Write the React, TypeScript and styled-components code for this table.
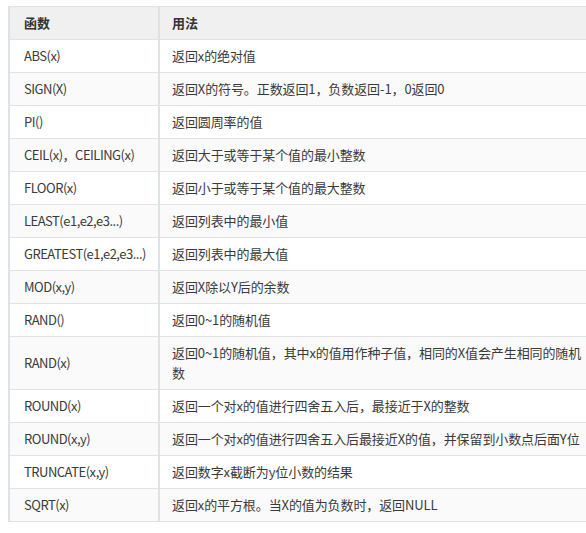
import React from "react";
import styled, { createGlobalStyle } from "styled-components";

const GlobalStyle = createGlobalStyle`
  html, body {
    margin: 0;
    padding: 0;
    background: #ffffff;
    overflow: hidden;
  }
  body {
    font-family: "Noto Sans CJK SC", "Noto Sans", sans-serif;
  }
`;

const Page = styled.div`
  padding: 6px 0 0 8px;
  width: 586px;
  height: 533px;
  box-sizing: border-box;
  overflow: hidden;
`;

const Table = styled.table`
  border-collapse: collapse;
  width: 594px;
  table-layout: fixed;
  font-size: 13px;
  line-height: 20px;
  color: #3a3a3a;
  border-left: 2px solid #dfe2e5;
  border-right: 2px solid #dfe2e5;
`;

const HeadRow = styled.tr`
  background: #f0f0f0;
`;

const Row = styled.tr<{ $shade: boolean }>`
  background: ${(p) => (p.$shade ? "#fafafa" : "#ffffff")};
`;

const Th = styled.th`
  text-align: left;
  font-weight: 700;
  color: #333333;
  padding: 6px 13px 6px 14px;
  border-top: 1px solid #dfe2e5;
  border-bottom: 1px solid #dfe2e5;
  border-right: 2px solid #dfe2e5;
  &:last-child {
    border-right: none;
    padding-left: 12px;
  }
`;

const Td = styled.td`
  padding: 6px 13px 6px 14px;
  border-bottom: 1px solid #dfe2e5;
  border-right: 2px solid #dfe2e5;
  vertical-align: middle;
  white-space: nowrap;
  letter-spacing: -0.5px;
  &:last-child {
    border-right: none;
    padding-left: 12px;
    white-space: normal;
    letter-spacing: -0.1px;
  }
`;

const rows: [string, string][] = [
  ["ABS(x)", "返回x的绝对值"],
  ["SIGN(X)", "返回X的符号。正数返回1，负数返回-1，0返回0"],
  ["PI()", "返回圆周率的值"],
  ["CEIL(x)，CEILING(x)", "返回大于或等于某个值的最小整数"],
  ["FLOOR(x)", "返回小于或等于某个值的最大整数"],
  ["LEAST(e1,e2,e3...)", "返回列表中的最小值"],
  ["GREATEST(e1,e2,e3...)", "返回列表中的最大值"],
  ["MOD(x,y)", "返回X除以Y后的余数"],
  ["RAND()", "返回0~1的随机值"],
  ["RAND(x)", "返回0~1的随机值，其中x的值用作种子值，相同的X值会产生相同的随机数"],
  ["ROUND(x)", "返回一个对x的值进行四舍五入后，最接近于X的整数"],
  ["ROUND(x,y)", "返回一个对x的值进行四舍五入后最接近X的值，并保留到小数点后面Y位"],
  ["TRUNCATE(x,y)", "返回数字x截断为y位小数的结果"],
  ["SQRT(x)", "返回x的平方根。当X的值为负数时，返回NULL"],
];

export default function App() {
  return (
    <>
      <GlobalStyle />
      <Page>
        <Table>
          <colgroup>
            <col style={{ width: 150 }} />
            <col />
          </colgroup>
          <thead>
            <HeadRow>
              <Th>函数</Th>
              <Th>用法</Th>
            </HeadRow>
          </thead>
          <tbody>
            {rows.map(([fn, desc], i) => (
              <Row key={fn} $shade={i % 2 === 1}>
                <Td>{fn}</Td>
                <Td>{desc}</Td>
              </Row>
            ))}
          </tbody>
        </Table>
      </Page>
    </>
  );
}
